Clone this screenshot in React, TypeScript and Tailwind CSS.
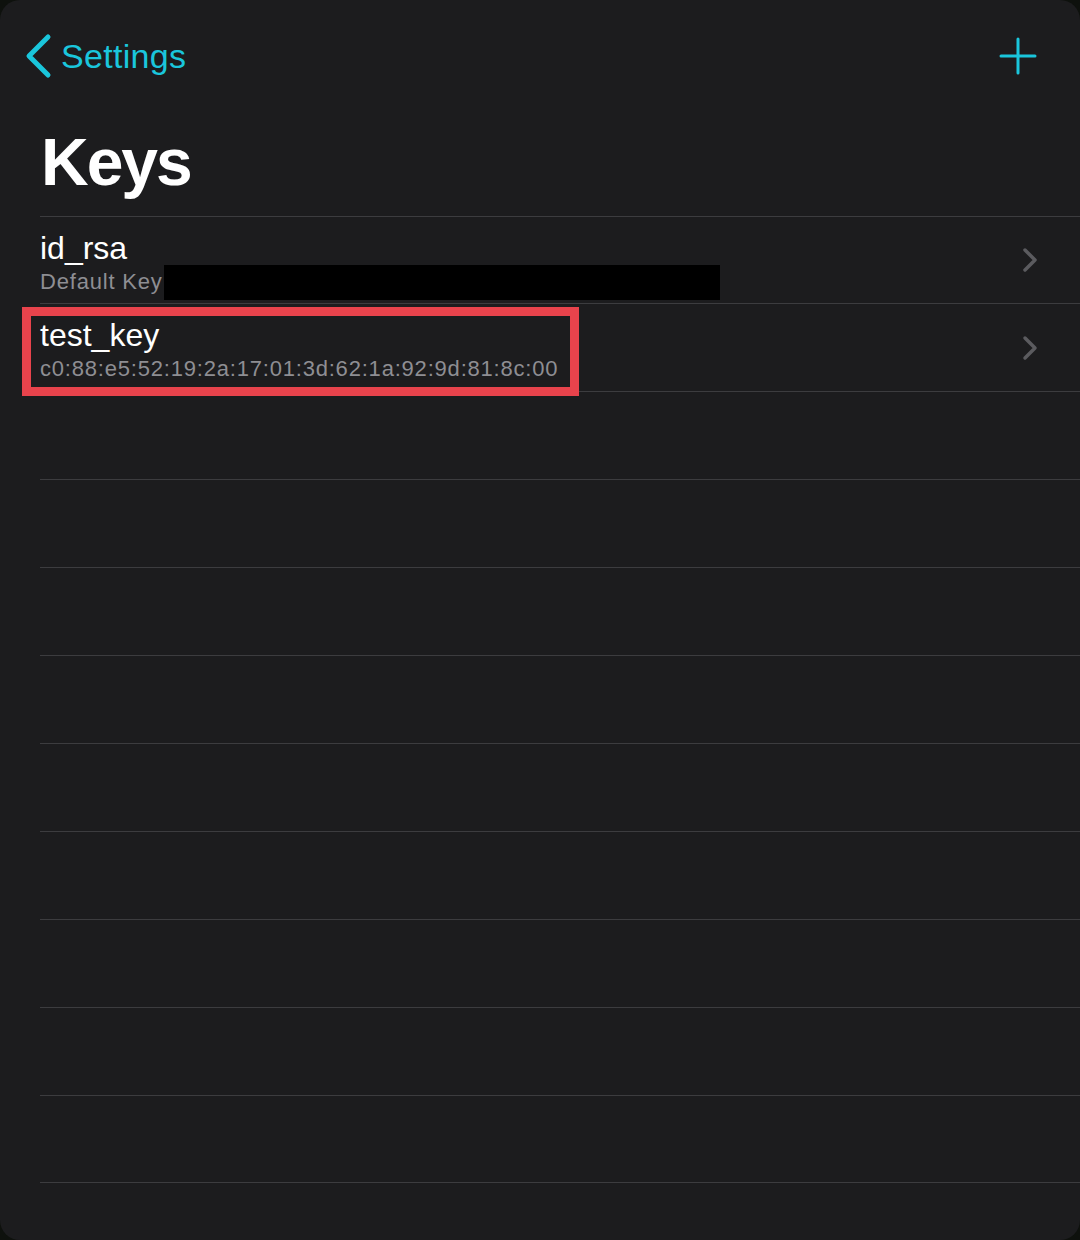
import React from "react";

const keys = [
  { name: "id_rsa", detail: "Default Key", redacted: true, highlighted: false },
  {
    name: "test_key",
    detail: "c0:88:e5:52:19:2a:17:01:3d:62:1a:92:9d:81:8c:00",
    redacted: false,
    highlighted: true,
  },
];

function ChevronRight() {
  return (
    <svg width="20" height="28" viewBox="0 0 20 28" className="shrink-0">
      <polyline
        points="5,4 15,14 5,24"
        fill="none"
        stroke="#5b5b5f"
        strokeWidth="3.5"
        strokeLinecap="round"
        strokeLinejoin="round"
      />
    </svg>
  );
}

export default function App() {
  return (
    <div
      className="w-[1080px] h-[1240px] bg-[#0e110d]"
      style={{ fontFamily: '"Liberation Sans", Arial, sans-serif' }}
    >
      <div className="h-full rounded-[20px] bg-[#1c1c1e] overflow-hidden">
        {/* Nav bar */}
        <div className="h-[112px] flex items-center justify-between pl-[24px] pr-[42px]">
          <button className="flex items-center text-[#1ac6dc]">
            <svg width="30" height="46" viewBox="0 0 30 46" className="shrink-0">
              <polyline
                points="24,4 5,23 24,42"
                fill="none"
                stroke="#1ac6dc"
                strokeWidth="5"
                strokeLinecap="round"
                strokeLinejoin="round"
              />
            </svg>
            <span className="ml-[7px] text-[34px] leading-[40px] tracking-[0.3px]">Settings</span>
          </button>
          <svg width="40" height="40" viewBox="0 0 40 40" className="shrink-0">
            <line x1="20" y1="3" x2="20" y2="37" stroke="#1ac6dc" strokeWidth="3" strokeLinecap="round" />
            <line x1="3" y1="20" x2="37" y2="20" stroke="#1ac6dc" strokeWidth="3" strokeLinecap="round" />
          </svg>
        </div>

        {/* Large title */}
        <div className="h-[104px] pl-[41px] pt-[17px]">
          <h1 className="text-[66px] leading-[66px] font-bold text-white tracking-[-2px]">Keys</h1>
        </div>

        {/* Key list */}
        <div>
          {keys.map((k, i) => (
            <div
              key={k.name}
              className={`relative ml-[40px] border-t border-[#3c3c3f] flex items-center pr-[40px] ${
                i === 0 ? "h-[87px]" : "h-[88px]"
              }`}
            >
              <div className="flex-1 self-start pt-[12px]">
                <div className="text-[32px] leading-[38px] text-white">{k.name}</div>
                <div className="mt-[2px] text-[22px] leading-[26px] text-[#8e8e93] tracking-[0.8px]">
                  {k.detail}
                </div>
              </div>
              <ChevronRight />
              {k.redacted && (
                <div className="absolute left-[124px] top-[48px] w-[556px] h-[35px] bg-black" />
              )}
              {k.highlighted && (
                <div className="absolute -left-[18px] top-[3px] w-[557px] h-[89px] border-[9px] border-[#e8434c] z-10" />
              )}
            </div>
          ))}
          {Array.from({ length: 9 }).map((_, i) => (
            <div
              key={i}
              className={`ml-[40px] h-[88px] border-t border-[#3c3c3f] ${i === 8 ? "border-b" : ""}`}
            />
          ))}
        </div>
      </div>
    </div>
  );
}
